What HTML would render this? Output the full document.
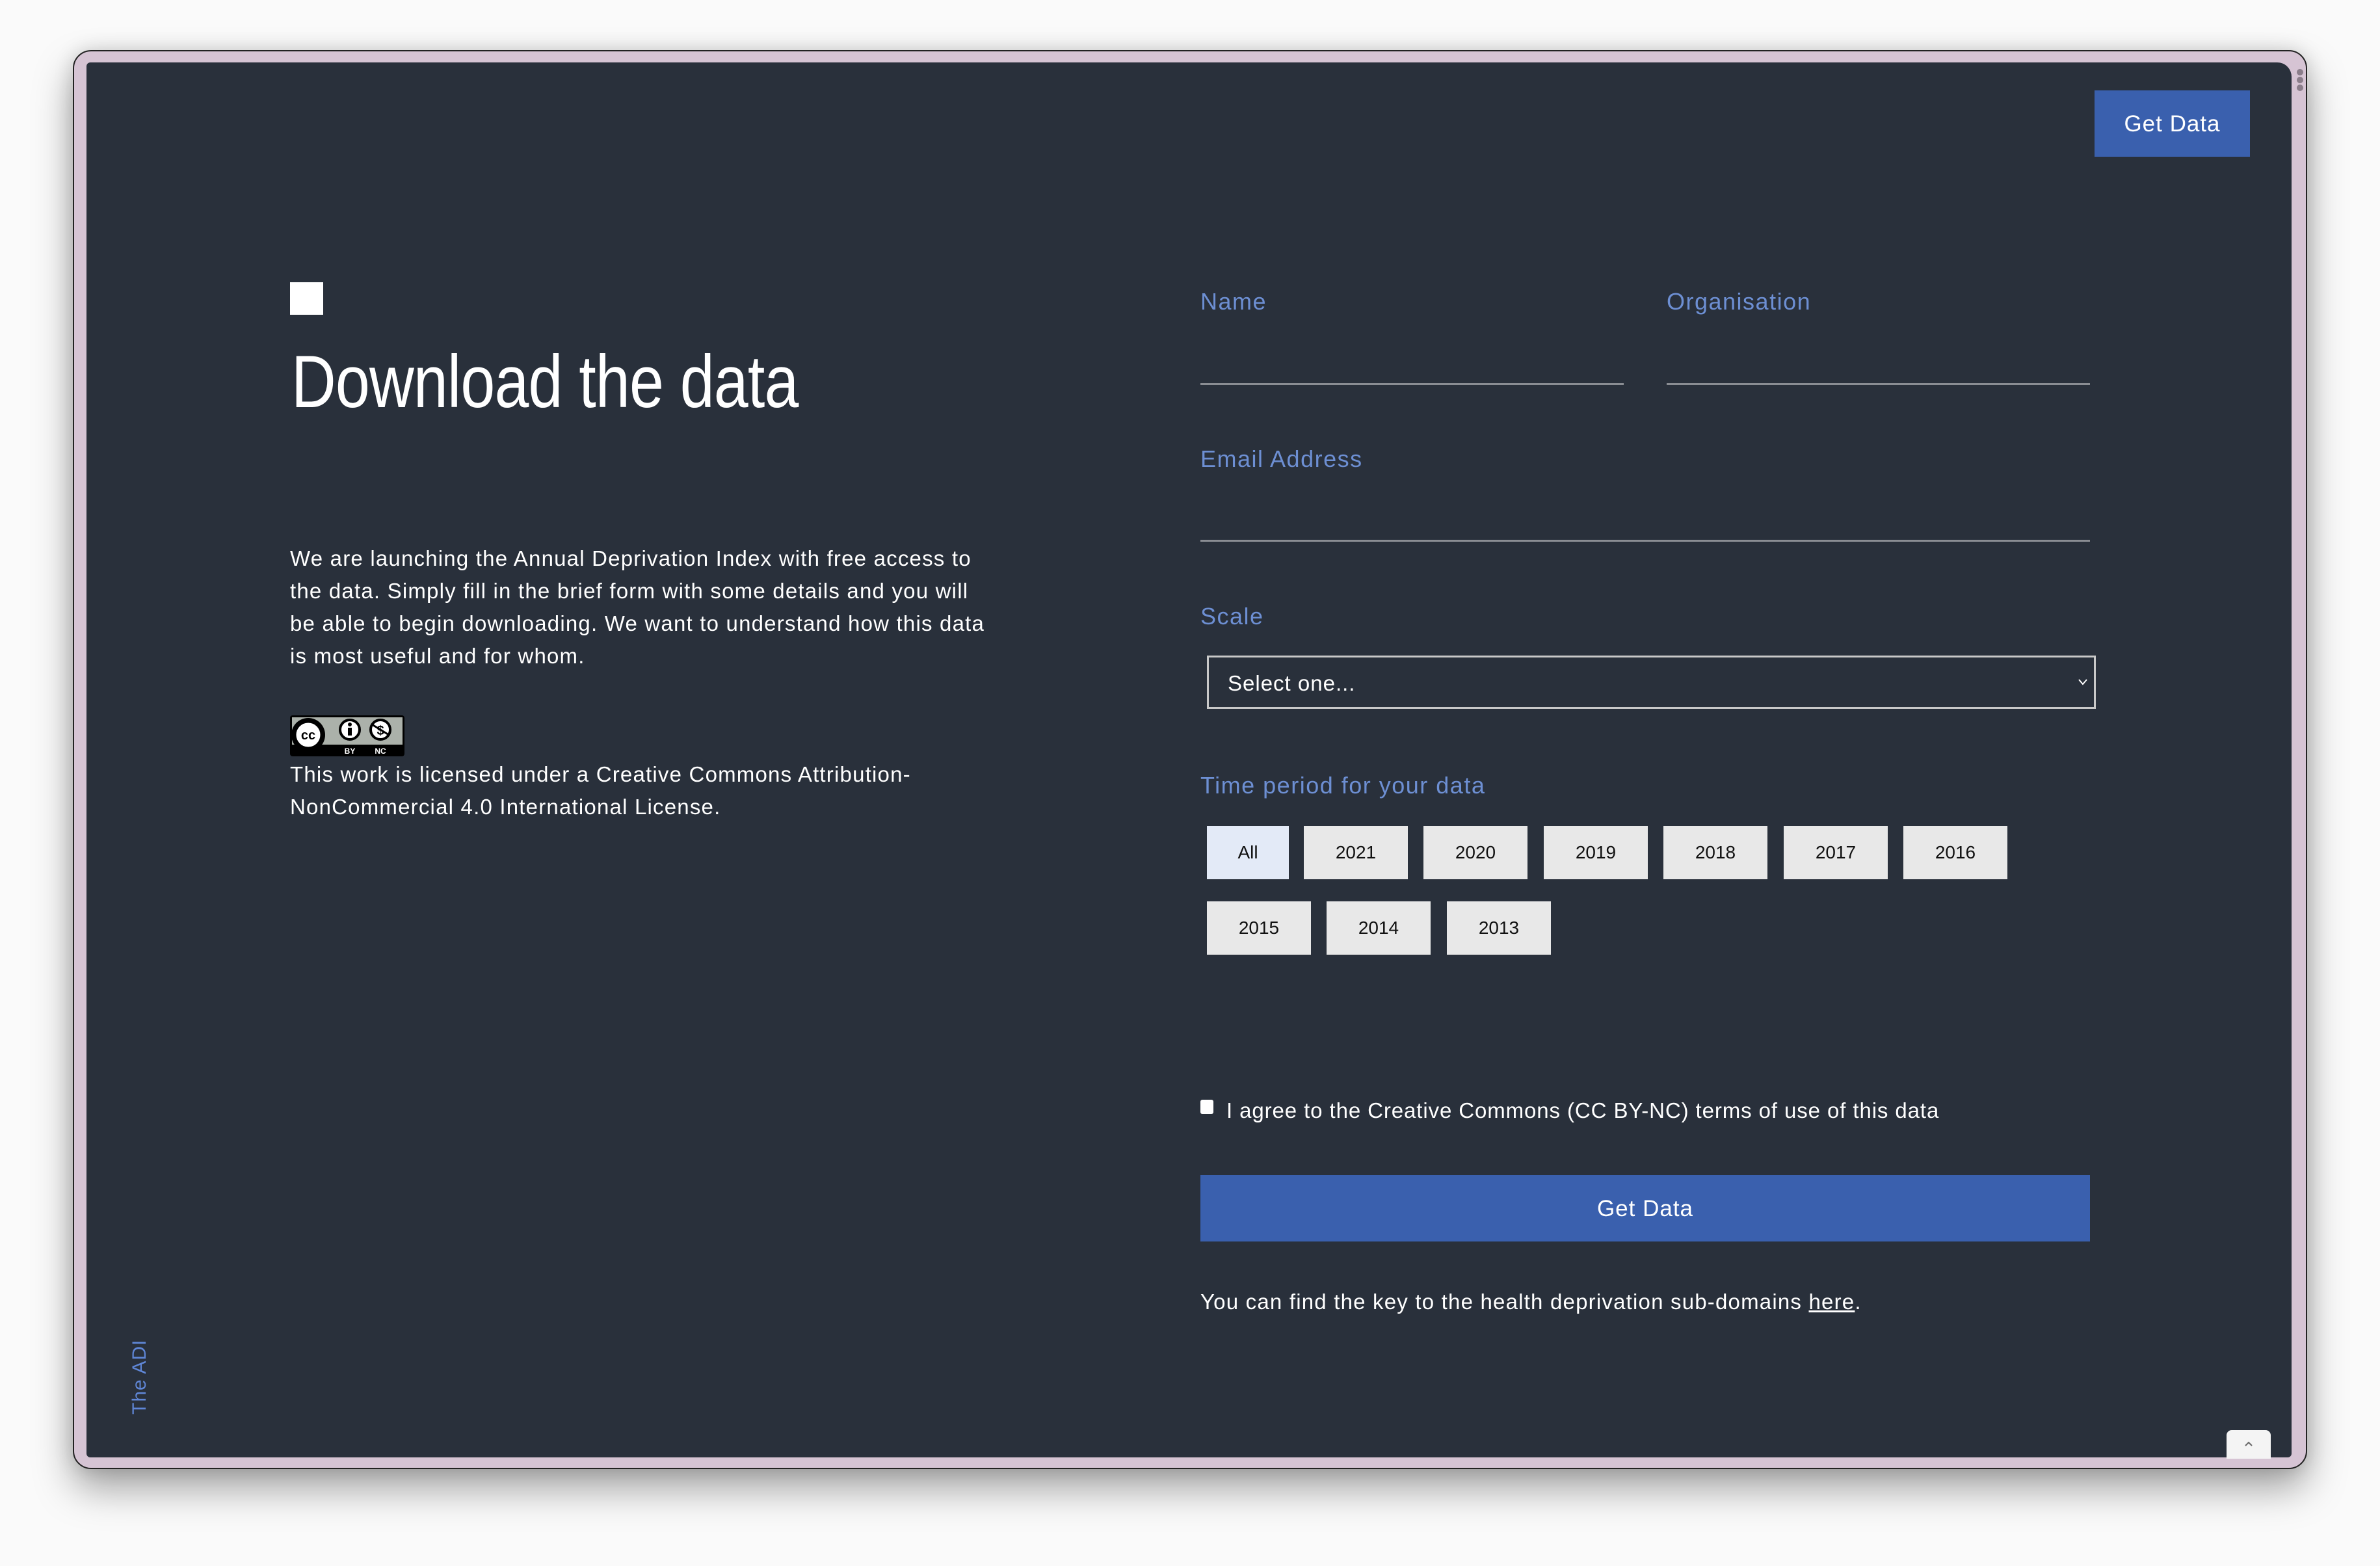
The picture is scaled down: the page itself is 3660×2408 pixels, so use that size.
<!DOCTYPE html>
<html><head><meta charset="utf-8">
<style>
html,body{margin:0;padding:0;}
body{width:3660px;height:2408px;background:#fafafa;position:relative;overflow:hidden;font-family:"Liberation Sans",sans-serif;}
.frame{position:absolute;left:112px;top:77px;width:3436px;height:2182px;background:#d6c4d4;border:2px solid #222;border-radius:28px;box-sizing:border-box;box-shadow:0 30px 60px rgba(0,0,0,0.35),0 0 30px rgba(0,0,0,0.15);}
.inner{position:absolute;left:133px;top:96px;width:3391px;height:2145px;background:#29303b;border-radius:6px 22px 6px 6px;overflow:hidden;}
.abs{position:absolute;white-space:nowrap;}
.btn{position:absolute;background:#3a60ae;color:#fff;text-align:center;font-size:35px;letter-spacing:1px;}
.lbl{position:absolute;color:#6d8fd3;font-size:36px;white-space:nowrap;letter-spacing:1.5px;}
.line{position:absolute;height:3px;background:#8a8d93;}
.yr{position:absolute;background:#e8e8e8;color:#111;font-size:28px;text-align:center;line-height:82px;height:82px;width:160px;}
.txt{color:#fff;font-size:33px;line-height:50px;letter-spacing:1.2px;}
</style></head><body>
<div class="frame"></div>
<div class="inner"></div>
<div class="abs" style="left:3532px;top:106px;width:10px;height:10px;border-radius:5px;background:#8a7d8a"></div>
<div class="abs" style="left:3532px;top:118px;width:10px;height:10px;border-radius:5px;background:#8a7d8a"></div>
<div class="abs" style="left:3532px;top:130px;width:10px;height:10px;border-radius:5px;background:#8a7d8a"></div>

<div class="btn" style="left:3221px;top:139px;width:239px;height:102px;line-height:104px;">Get Data</div>

<div class="abs" style="left:446px;top:434px;width:51px;height:50px;background:#fff"></div>
<div class="abs" style="left:448px;top:523px;font-size:114px;color:#fff;transform:scaleX(0.835);transform-origin:left top;letter-spacing:-1px;line-height:130px;">Download the data</div>

<div class="abs txt" style="left:446px;top:834px;">We are launching the Annual Deprivation Index with free access to<br>the data. Simply fill in the brief form with some details and you will<br>be able to begin downloading. We want to understand how this data<br>is most useful and for whom.</div>

<svg class="abs" style="left:446px;top:1100px" width="176" height="63" viewBox="0 0 176 63">
<rect x="0" y="0" width="176" height="63" rx="4" fill="#000"/>
<rect x="3" y="3" width="170" height="42" fill="#abb1aa"/>
<circle cx="28" cy="30" r="26" fill="#000"/>
<circle cx="28" cy="30" r="20" fill="#fff" stroke="#000" stroke-width="3"/>
<text x="28" y="37" font-family="Liberation Sans" font-weight="bold" font-size="20" text-anchor="middle" fill="#000">cc</text>
<circle cx="92" cy="22" r="15" fill="#fff" stroke="#000" stroke-width="4"/>
<circle cx="92" cy="14" r="3" fill="#000"/><rect x="89" y="19" width="6" height="12" fill="#000"/>
<circle cx="139" cy="22" r="15" fill="#fff" stroke="#000" stroke-width="4"/>
<text x="139" y="30" font-family="Liberation Sans" font-weight="bold" font-size="20" text-anchor="middle" fill="#000">$</text>
<line x1="126" y1="14" x2="152" y2="30" stroke="#000" stroke-width="3"/>
<text x="92" y="59" font-family="Liberation Sans" font-weight="bold" font-size="12" text-anchor="middle" fill="#fff">BY</text>
<text x="139" y="59" font-family="Liberation Sans" font-weight="bold" font-size="12" text-anchor="middle" fill="#fff">NC</text>
</svg>

<div class="abs txt" style="left:446px;top:1166px;">This work is licensed under a Creative Commons Attribution-<br>NonCommercial 4.0 International License.</div>

<div class="lbl" style="left:1846px;top:443px;">Name</div>
<div class="lbl" style="left:2563px;top:443px;">Organisation</div>
<div class="line" style="left:1846px;top:589px;width:651px;"></div>
<div class="line" style="left:2563px;top:589px;width:651px;"></div>
<div class="lbl" style="left:1846px;top:685px;">Email Address</div>
<div class="line" style="left:1846px;top:830px;width:1368px;"></div>
<div class="lbl" style="left:1846px;top:927px;">Scale</div>
<div class="abs" style="left:1856px;top:1008px;width:1367px;height:82px;border:3px solid #c8c8c8;box-sizing:border-box;"></div>
<div class="abs" style="left:1888px;top:1032px;font-size:33px;color:#fff;letter-spacing:1px;">Select one...</div>
<svg class="abs" style="left:3195px;top:1042px" width="16" height="14"><path d="M2 3 L8 10 L14 3" stroke="#fff" stroke-width="2" fill="none"/></svg>

<div class="lbl" style="left:1846px;top:1187px;">Time period for your data</div>
<div class="yr" style="left:1856px;top:1270px;width:126px;background:#e3eaf7">All</div>
<div class="yr" style="left:2005px;top:1270px;">2021</div>
<div class="yr" style="left:2189px;top:1270px;">2020</div>
<div class="yr" style="left:2374px;top:1270px;">2019</div>
<div class="yr" style="left:2558px;top:1270px;">2018</div>
<div class="yr" style="left:2743px;top:1270px;">2017</div>
<div class="yr" style="left:2927px;top:1270px;">2016</div>
<div class="yr" style="left:1856px;top:1386px;">2015</div>
<div class="yr" style="left:2040px;top:1386px;">2014</div>
<div class="yr" style="left:2225px;top:1386px;">2013</div>

<div class="abs" style="left:1846px;top:1691px;width:20px;height:22px;background:#fff;border-radius:3px;"></div>
<div class="abs" style="left:1886px;top:1689px;font-size:33px;color:#fff;letter-spacing:0.9px;">I agree to the Creative Commons (CC BY-NC) terms of use of this data</div>

<div class="btn" style="left:1846px;top:1807px;width:1368px;height:102px;line-height:104px;">Get Data</div>

<div class="abs" style="left:1846px;top:1983px;font-size:33px;color:#fff;letter-spacing:1.2px;">You can find the key to the health deprivation sub-domains <span style="text-decoration:underline">here</span>.</div>

<div class="abs" style="left:198px;top:2175px;font-size:30px;color:#5f86d6;transform:rotate(-90deg);transform-origin:left top;letter-spacing:1px;">The ADI</div>

<div class="abs" style="left:3424px;top:2199px;width:68px;height:44px;background:#f4f4f4;border-radius:8px 8px 0 0;"></div>
<svg class="abs" style="left:3450px;top:2214px" width="16" height="12"><path d="M3 9 L8 4 L13 9" stroke="#666" stroke-width="2" fill="none"/></svg>
</body></html>
